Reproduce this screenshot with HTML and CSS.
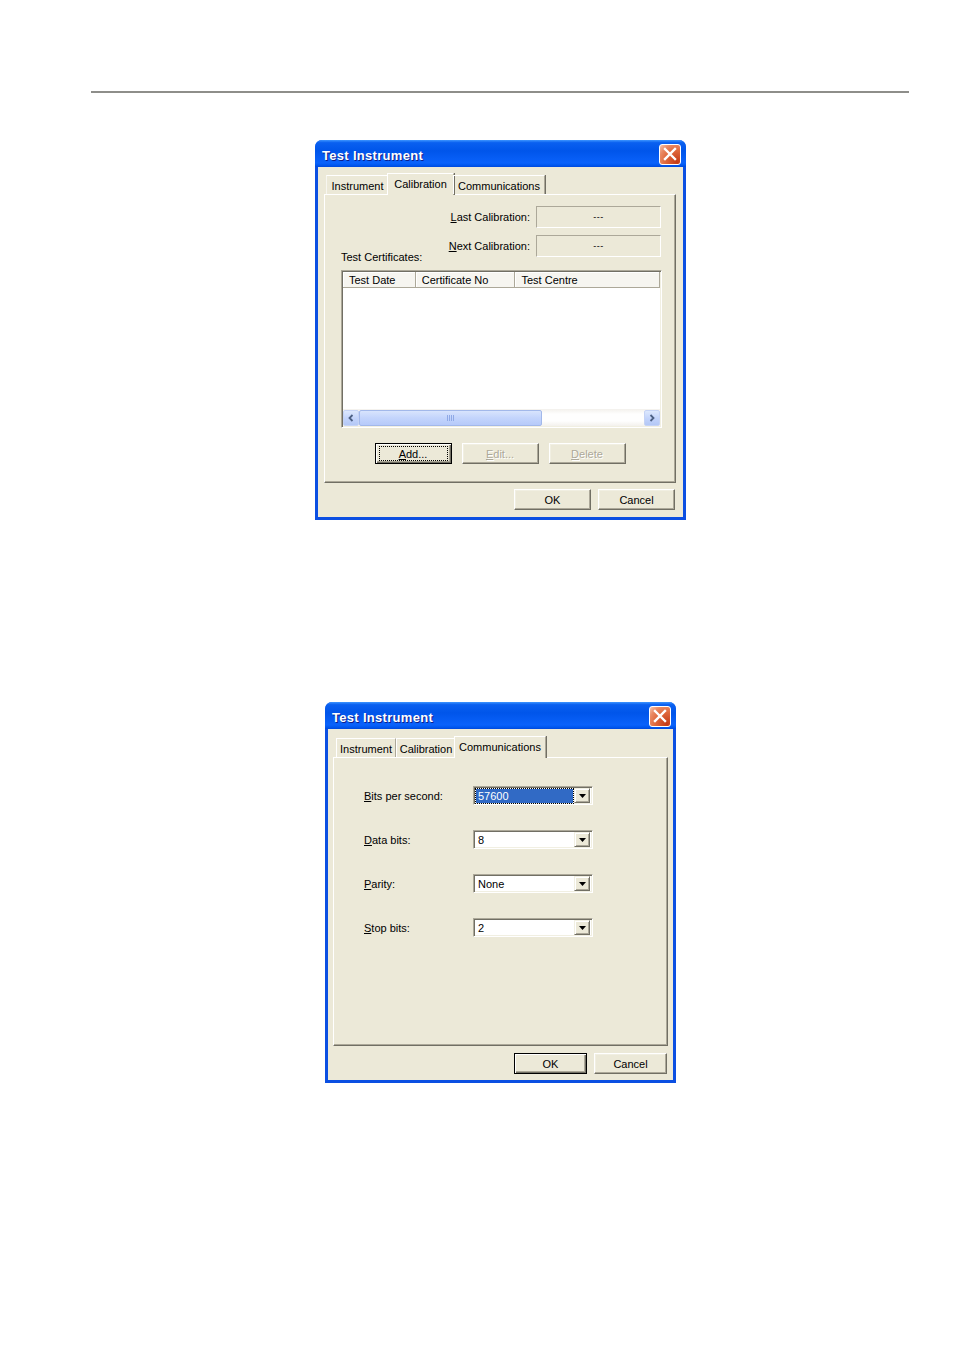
FILE: index.html
```html
<!DOCTYPE html>
<html>
<head>
<meta charset="utf-8">
<title>Test Instrument</title>
<link rel="stylesheet" href="styles.css">
</head>
<body>
<div class="rule"></div>

<div class="dlg dlg1">
  <div class="titlebar">
    <span class="title">Test Instrument</span>
    <span class="close"><svg width="14" height="14" viewBox="0 0 14 14"><path d="M2 2 L12 12 M12 2 L2 12" stroke="#fff" stroke-width="2.4" stroke-linecap="square"/></svg></span>
  </div>
  <div class="client">
    <div class="tabs">
      <div class="tab t-inst">Instrument</div>
      <div class="tab sel t-cal">Calibration</div>
      <div class="tab t-comm">Communications</div>
    </div>
    <div class="panel">
      <div class="cal-row">
        <span class="cal-pair"><span class="lbl"><u>L</u>ast Calibration:</span><span class="field">---</span></span>
      </div>
      <div class="cal-row split">
        <span class="certs">Test Certificates:</span>
        <span class="cal-pair"><span class="lbl"><u>N</u>ext Calibration:</span><span class="field">---</span></span>
      </div>
      <div class="list">
        <div class="lhead">
          <span class="hcell c1">Test Date</span>
          <span class="hcell c2">Certificate No</span>
          <span class="hcell c3">Test Centre</span>
          <span class="hfill"></span>
        </div>
        <div class="lbody"></div>
        <div class="hscroll">
          <span class="sbtn"><svg width="8" height="8" viewBox="0 0 8 8"><path d="M5.5 1 L2.5 4 L5.5 7" fill="none" stroke="#4d6185" stroke-width="1.8"/></svg></span>
          <span class="thumb"><svg width="8" height="6" viewBox="0 0 8 6"><path d="M0.5 0 V6 M2.5 0 V6 M4.5 0 V6 M6.5 0 V6" stroke="#8fa9e6" stroke-width="1"/></svg></span>
          <span class="track"></span>
          <span class="sbtn"><svg width="8" height="8" viewBox="0 0 8 8"><path d="M2.5 1 L5.5 4 L2.5 7" fill="none" stroke="#4d6185" stroke-width="1.8"/></svg></span>
        </div>
      </div>
      <div class="btnrow">
        <div class="btn def"><span class="focus"><u>A</u>dd...</span></div>
        <div class="btn dis"><u>E</u>dit...</div>
        <div class="btn dis"><u>D</u>elete</div>
      </div>
    </div>
    <div class="footer">
      <div class="btn">OK</div>
      <div class="btn">Cancel</div>
    </div>
  </div>
</div>

<div class="dlg dlg2">
  <div class="titlebar">
    <span class="title">Test Instrument</span>
    <span class="close"><svg width="14" height="14" viewBox="0 0 14 14"><path d="M2 2 L12 12 M12 2 L2 12" stroke="#fff" stroke-width="2.4" stroke-linecap="square"/></svg></span>
  </div>
  <div class="client">
    <div class="tabs">
      <div class="tab t2-inst">Instrument</div>
      <div class="tab t2-cal">Calibration</div>
      <div class="tab sel t2-comm">Communications</div>
    </div>
    <div class="panel">
      <div class="form">
        <span class="flbl"><u>B</u>its per second:</span>
        <div class="combo"><span class="ctext hl"><span class="hltext">57600</span></span><span class="cbtn"><svg width="7" height="4" viewBox="0 0 7 4"><path d="M0 0 H7 L3.5 4 Z" fill="#000"/></svg></span></div>
        <span class="flbl"><u>D</u>ata bits:</span>
        <div class="combo"><span class="ctext">8</span><span class="cbtn"><svg width="7" height="4" viewBox="0 0 7 4"><path d="M0 0 H7 L3.5 4 Z" fill="#000"/></svg></span></div>
        <span class="flbl"><u>P</u>arity:</span>
        <div class="combo"><span class="ctext">None</span><span class="cbtn"><svg width="7" height="4" viewBox="0 0 7 4"><path d="M0 0 H7 L3.5 4 Z" fill="#000"/></svg></span></div>
        <span class="flbl"><u>S</u>top bits:</span>
        <div class="combo"><span class="ctext">2</span><span class="cbtn"><svg width="7" height="4" viewBox="0 0 7 4"><path d="M0 0 H7 L3.5 4 Z" fill="#000"/></svg></span></div>
      </div>
    </div>
    <div class="footer">
      <div class="btn def">OK</div>
      <div class="btn">Cancel</div>
    </div>
  </div>
</div>
</body>
</html>
```

FILE: styles.css
```css
* { box-sizing: border-box; }

body {
  margin: 0;
  background: #fff;
  font-family: "Liberation Sans", Arial, sans-serif;
  font-size: 11px;
  color: #000;
}

.rule {
  margin: 91px 0 0 91px;
  width: 818px;
  height: 2px;
  background: #8e8e8a;
}

/* ---------- window frame ---------- */
.dlg {
  background: #0b4fe2;
  border-radius: 7px 7px 0 0;
  overflow: hidden;
}
.dlg1 { width: 371px; margin: 47px 0 0 315px; }
.dlg2 { width: 351px; margin: 182px 0 0 325px; }

.titlebar {
  height: 27px;
  display: flex;
  align-items: center;
  justify-content: space-between;
  padding: 4px 5px 0 7px;
  background: linear-gradient(180deg, #3d95ff 0, #0a60f0 10%, #0055ea 40%, #0a62fb 85%, #0058f0 93%, #0048dc 100%);
}
.title {
  color: #fff;
  font-weight: bold;
  font-size: 13px;
  letter-spacing: 0.3px;
  text-shadow: 1px 1px #0f1e8a;
}
.close {
  width: 22px;
  height: 21px;
  margin-top: -3px;
  border: 1px solid #fff;
  border-radius: 3px;
  display: flex;
  align-items: center;
  justify-content: center;
  background: radial-gradient(circle at 85% 90%, #c43a16 0, #e06a3e 50%, #e98a64 75%, #f7c6b0 100%);
}

.client {
  margin: 0 3px 3px;
  background: #ece9d8;
  display: flex;
  flex-direction: column;
}
.dlg1 .client { height: 350px; padding-top: 6px; }
.dlg2 .client { height: 351px; padding-top: 7px; }

/* ---------- tabs ---------- */
.tabs {
  display: flex;
  align-items: flex-end;
  height: 21px;
  margin-left: 8px;
  position: relative;
  z-index: 2;
}
.tab {
  height: 19px;
  display: flex;
  align-items: center;
  justify-content: center;
  padding-top: 1px;
  border-top: 1px solid #fff;
  border-left: 1px solid #fff;
  border-right: 1px solid #aca899;
  box-shadow: 1px 0 #716f64;
  white-space: nowrap;
}
.tab.sel {
  height: 22px;
  margin-bottom: -1px;
  margin-left: -2px;
  margin-right: -1px;
  padding-bottom: 3px;
  background: #ece9d8;
}
.t-inst { width: 63px; border-left-color: #f7f6f0; border-right-color: transparent; box-shadow: none; }
.t-cal { width: 67px; }
.t-comm { width: 92px; }
.t2-inst { width: 60px; }
.t2-cal { width: 60px; }
.t2-comm { width: 92px; }

.panel {
  border: 1px solid;
  border-color: #fff #716f64 #716f64 #fff;
  box-shadow: inset -1px -1px #aca899;
  height: 289px;
  position: relative;
  z-index: 1;
}
.dlg1 .panel { margin-left: 6px; width: 352px; padding-top: 11px; }
.dlg2 .panel { margin-left: 5px; width: 335px; padding-top: 28px; }

/* ---------- calibration page ---------- */
.cal-row {
  display: flex;
  justify-content: flex-end;
  padding-right: 14px;
}
.cal-row + .cal-row { margin-top: 7px; }
.cal-row.split { justify-content: space-between; padding-left: 16px; }
.certs { align-self: flex-end; margin-bottom: -6px; }
.cal-pair {
  display: flex;
  align-items: center;
  gap: 6px;
}
.field {
  width: 125px;
  height: 22px;
  display: flex;
  align-items: center;
  justify-content: center;
  border: 1px solid;
  border-color: #aca899 #fff #fff #aca899;
  font-size: 9px;
  letter-spacing: 0.5px;
}

.list {
  margin: 13px 0 0 16px;
  width: 321px;
  height: 158px;
  border: 1px solid;
  border-color: #aca899 #fff #fff #aca899;
  box-shadow: inset 1px 1px #716f64, inset -1px -1px #f1efe2;
  padding: 1px;
  background: #fff;
  display: flex;
  flex-direction: column;
}
.lhead {
  display: flex;
  height: 16px;
  flex: none;
}
.hcell, .hfill {
  height: 16px;
  display: flex;
  align-items: center;
  padding-left: 6px;
  background: #f6f5f0;
  border-right: 1px solid #aca899;
  border-bottom: 1px solid #aca899;
  box-shadow: inset 1px 1px #fff;
}
.c1 { width: 73px; }
.c2 { width: 100px; }
.c3 { width: 145px; }
.hfill { flex: 1; border-right: none; padding: 0; }
.lbody { flex: 1; background: #fff; }

.hscroll {
  height: 17px;
  flex: none;
  display: flex;
  background: linear-gradient(180deg, #f3f1ec, #fefefe 30%, #fefefe 70%, #f3f1ec);
}
.sbtn {
  width: 16px;
  height: 16px;
  margin-top: 1px;
  border: 1px solid #c5d3f5;
  border-radius: 2px;
  background: linear-gradient(180deg, #dde8fd, #c2d3fb 55%, #b4c8f6);
  display: flex;
  align-items: center;
  justify-content: center;
}
.thumb {
  width: 183px;
  height: 16px;
  margin-top: 1px;
  border: 1px solid #a2b8ea;
  border-radius: 2px;
  background: linear-gradient(180deg, #d8e4fd, #c3d4fc 50%, #b6cafa);
  display: flex;
  align-items: center;
  justify-content: center;
}
.track { flex: 1; }

.btnrow {
  display: flex;
  justify-content: center;
  gap: 10px;
  margin-top: 15px;
}

/* ---------- buttons ---------- */
.btn {
  width: 77px;
  height: 21px;
  display: flex;
  align-items: center;
  justify-content: center;
  background: #ece9d8;
  border: 1px solid;
  border-color: #fff #716f64 #716f64 #fff;
  box-shadow: inset -1px -1px #aca899, inset 1px 1px #f1efe2;
}
.btn.def {
  border-color: #000;
  box-shadow: inset 1px 1px #fff, inset -1px -1px #716f64, inset -2px -2px #aca899;
}
.btn.dis {
  color: #aca899;
  text-shadow: 1px 1px #fff;
}
.focus {
  width: 69px;
  height: 15px;
  display: flex;
  align-items: center;
  justify-content: center;
  border: 1px dotted #000;
}

.footer {
  display: flex;
  justify-content: flex-end;
  gap: 7px;
}
.dlg1 .footer { margin-top: 6px; padding-right: 8px; }
.dlg2 .footer { margin-top: 7px; padding-right: 6px; }
.dlg2 .footer .btn { width: 73px; }

/* ---------- communications page ---------- */
.form {
  display: grid;
  grid-template-columns: 109px 120px;
  row-gap: 25px;
  padding-left: 30px;
  align-items: center;
}
.flbl { white-space: nowrap; }
.combo {
  height: 19px;
  display: flex;
  align-items: stretch;
  background: #fff;
  border: 1px solid;
  border-color: #aca899 #fff #fff #aca899;
  box-shadow: inset 1px 1px #716f64, inset -1px -1px #f1efe2;
  padding: 2px 2px 1px 2px;
}
.ctext {
  flex: 1;
  display: flex;
  align-items: center;
  padding-left: 2px;
}
.ctext.hl { padding: 0 1px 0 0; }
.hltext {
  flex: 1;
  height: 100%;
  display: flex;
  align-items: center;
  padding-left: 2px;
  background: #316ac5;
  color: #fff;
  outline: 1px dotted #000;
  outline-offset: 0;
}
.cbtn {
  width: 16px;
  margin-top: -1px;
  display: flex;
  align-items: center;
  justify-content: center;
  background: #ece9d8;
  border: 1px solid;
  border-color: #f1efe2 #716f64 #716f64 #f1efe2;
  box-shadow: inset 1px 1px #fff, inset -1px -1px #aca899;
}
```
